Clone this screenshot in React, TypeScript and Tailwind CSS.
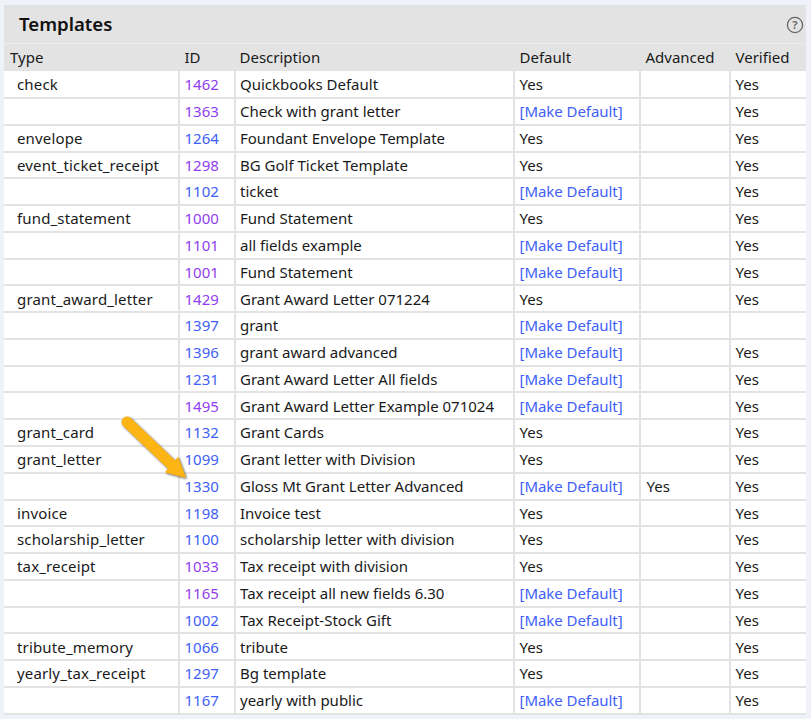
const font = "font-['Noto_Sans',sans-serif]";

const purple = "text-[#9040f0]";
const blue = "text-[#4060f8]";

type Row = {
  type?: string;
  id: string;
  visited?: boolean;
  desc: string;
  isDefault?: boolean;
  advanced?: boolean;
  verified?: boolean;
};

const rows: Row[] = [
  { type: "check", id: "1462", visited: true, desc: "Quickbooks Default", isDefault: true, verified: true },
  { id: "1363", visited: true, desc: "Check with grant letter", verified: true },
  { type: "envelope", id: "1264", desc: "Foundant Envelope Template", isDefault: true, verified: true },
  { type: "event_ticket_receipt", id: "1298", visited: true, desc: "BG Golf Ticket Template", isDefault: true, verified: true },
  { id: "1102", desc: "ticket", verified: true },
  { type: "fund_statement", id: "1000", visited: true, desc: "Fund Statement", isDefault: true, verified: true },
  { id: "1101", visited: true, desc: "all fields example", verified: true },
  { id: "1001", visited: true, desc: "Fund Statement", verified: true },
  { type: "grant_award_letter", id: "1429", visited: true, desc: "Grant Award Letter 071224", isDefault: true, verified: true },
  { id: "1397", desc: "grant" },
  { id: "1396", desc: "grant award advanced", verified: true },
  { id: "1231", desc: "Grant Award Letter All fields", verified: true },
  { id: "1495", visited: true, desc: "Grant Award Letter Example 071024", verified: true },
  { type: "grant_card", id: "1132", desc: "Grant Cards", isDefault: true, verified: true },
  { type: "grant_letter", id: "1099", desc: "Grant letter with Division", isDefault: true, verified: true },
  { id: "1330", desc: "Gloss Mt Grant Letter Advanced", advanced: true, verified: true },
  { type: "invoice", id: "1198", desc: "Invoice test", isDefault: true, verified: true },
  { type: "scholarship_letter", id: "1100", desc: "scholarship letter with division", isDefault: true, verified: true },
  { type: "tax_receipt", id: "1033", visited: true, desc: "Tax receipt with division", isDefault: true, verified: true },
  { id: "1165", visited: true, desc: "Tax receipt all new fields 6.30", verified: true },
  { id: "1002", desc: "Tax Receipt-Stock Gift", verified: true },
  { type: "tribute_memory", id: "1066", desc: "tribute", isDefault: true, verified: true },
  { type: "yearly_tax_receipt", id: "1297", desc: "Bg template", isDefault: true, verified: true },
  { id: "1167", desc: "yearly with public", verified: true },
];

const cell = "border-r-2 border-[#e3e3e3] px-[6px] py-0 align-middle";

export default function App() {
  return (
    <div className={`${font} w-[811px] h-[719px] bg-[#f0f2f9] pt-[5px] pl-[4px] text-[15px] text-[#1a1a1a] overflow-hidden`}>
      <div className="relative w-[802px]">
        <div className="flex items-center justify-between h-[39px] bg-[#e3e3e3] pl-[15px] pr-[2px] border-b border-[#ececec]">
          <h1 className="text-[18.6px] font-semibold text-[#111]">Templates</h1>
          <svg width="18" height="18" viewBox="0 0 18 18" className="mt-[2px]">
            <circle cx="9" cy="9" r="7.6" fill="none" stroke="#666" strokeWidth="1.3" />
            <text x="9" y="13" textAnchor="middle" fontSize="11.5" fontWeight="600" fill="#666">?</text>
          </svg>
        </div>
        <table className="w-[802px] table-fixed border-collapse">
          <thead>
            <tr className="h-[27.3px] bg-[#e3e3e3] font-normal text-left">
              <th className="w-[174.5px] px-[6px] font-normal">Type</th>
              <th className="w-[56px] px-[6px] font-normal">ID</th>
              <th className="w-[279px] pl-[5px] font-normal">Description</th>
              <th className="w-[126px] px-[6px] font-normal">Default</th>
              <th className="w-[90px] px-[6px] font-normal">Advanced</th>
              <th className="px-[6px] font-normal">Verified</th>
            </tr>
          </thead>
          <tbody className="bg-white">
            {rows.map((r) => (
              <tr key={r.id} className="h-[26.77px] border-b-2 border-[#e3e3e3]">
                <td className={`${cell} pl-[13px] tracking-[0.15px]`}>{r.type}</td>
                <td className={`${cell} pl-[5px] ${r.visited ? purple : blue}`}>{r.id}</td>
                <td className={`${cell} pl-[4.5px]`}>{r.desc}</td>
                <td className={`${cell} pl-[5px]`}>
                  {r.isDefault ? "Yes" : <span className={`${blue} tracking-[-0.05px]`}>[Make Default]</span>}
                </td>
                <td className={cell}>{r.advanced ? "Yes" : ""}</td>
                <td className="pl-[5px] pr-[6px] py-0 align-middle">{r.verified ? "Yes" : ""}</td>
              </tr>
            ))}
          </tbody>
        </table>
        <svg width="80" height="72" viewBox="0 0 80 72" className="absolute left-[117px] top-[410px] drop-shadow-[1px_1px_1px_rgba(0,0,0,0.6)]">
          <path d="M6 7 L51 50" stroke="#fcb514" strokeWidth="11" strokeLinecap="round" fill="none" />
          <path d="M64 62 L45 57 L57 43 Z" fill="#fcb514" stroke="#fcb514" strokeWidth="1.5" strokeLinejoin="round" />
        </svg>
      </div>
    </div>
  );
}
